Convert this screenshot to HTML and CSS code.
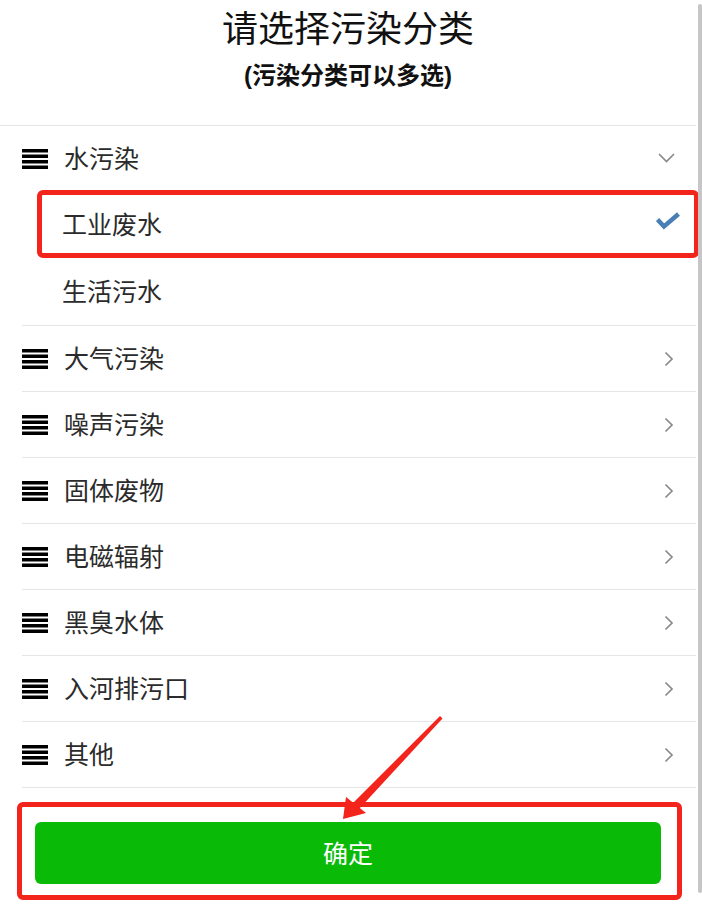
FILE: index.html
```html
<!DOCTYPE html>
<html lang="zh-CN">
<head>
<meta charset="utf-8">
<title>请选择污染分类</title>
<link rel="stylesheet" href="styles.css">
</head>
<body>
<div class="page">
  <header class="header">
    <h1 class="title">请选择污染分类</h1>
    <p class="subtitle">(污染分类可以多选)</p>
  </header>

  <div class="list">
    <div class="group">
      <div class="row head">
        <svg class="menu" viewBox="0 0 26 20" width="26" height="20"><rect x="0" y="0" width="26" height="3.5"/><rect x="0" y="5.5" width="26" height="3.5"/><rect x="0" y="11" width="26" height="3.5"/><rect x="0" y="16.5" width="26" height="3.5"/></svg>
        <span class="label">水污染</span>
        <svg class="arrow-down" viewBox="0 0 17 10" width="17" height="10"><polyline points="1,1 8.5,8.5 16,1"/></svg>
      </div>
      <div class="row sub">
        <span class="label">工业废水</span>
        <svg class="check" viewBox="0 0 24 18" width="24" height="18"><polyline points="1.5,7.5 8,14.5 22.5,2"/></svg>
      </div>
      <div class="row sub last">
        <span class="label">生活污水</span>
      </div>
    </div>

    <div class="row item">
      <svg class="menu" viewBox="0 0 26 20" width="26" height="20"><rect x="0" y="0" width="26" height="3.5"/><rect x="0" y="5.5" width="26" height="3.5"/><rect x="0" y="11" width="26" height="3.5"/><rect x="0" y="16.5" width="26" height="3.5"/></svg>
      <span class="label">大气污染</span>
      <svg class="arrow-right" viewBox="0 0 10 16" width="10" height="16"><polyline points="1.5,1.5 8,8 1.5,14.5"/></svg>
    </div>
    <div class="row item">
      <svg class="menu" viewBox="0 0 26 20" width="26" height="20"><rect x="0" y="0" width="26" height="3.5"/><rect x="0" y="5.5" width="26" height="3.5"/><rect x="0" y="11" width="26" height="3.5"/><rect x="0" y="16.5" width="26" height="3.5"/></svg>
      <span class="label">噪声污染</span>
      <svg class="arrow-right" viewBox="0 0 10 16" width="10" height="16"><polyline points="1.5,1.5 8,8 1.5,14.5"/></svg>
    </div>
    <div class="row item">
      <svg class="menu" viewBox="0 0 26 20" width="26" height="20"><rect x="0" y="0" width="26" height="3.5"/><rect x="0" y="5.5" width="26" height="3.5"/><rect x="0" y="11" width="26" height="3.5"/><rect x="0" y="16.5" width="26" height="3.5"/></svg>
      <span class="label">固体废物</span>
      <svg class="arrow-right" viewBox="0 0 10 16" width="10" height="16"><polyline points="1.5,1.5 8,8 1.5,14.5"/></svg>
    </div>
    <div class="row item">
      <svg class="menu" viewBox="0 0 26 20" width="26" height="20"><rect x="0" y="0" width="26" height="3.5"/><rect x="0" y="5.5" width="26" height="3.5"/><rect x="0" y="11" width="26" height="3.5"/><rect x="0" y="16.5" width="26" height="3.5"/></svg>
      <span class="label">电磁辐射</span>
      <svg class="arrow-right" viewBox="0 0 10 16" width="10" height="16"><polyline points="1.5,1.5 8,8 1.5,14.5"/></svg>
    </div>
    <div class="row item">
      <svg class="menu" viewBox="0 0 26 20" width="26" height="20"><rect x="0" y="0" width="26" height="3.5"/><rect x="0" y="5.5" width="26" height="3.5"/><rect x="0" y="11" width="26" height="3.5"/><rect x="0" y="16.5" width="26" height="3.5"/></svg>
      <span class="label">黑臭水体</span>
      <svg class="arrow-right" viewBox="0 0 10 16" width="10" height="16"><polyline points="1.5,1.5 8,8 1.5,14.5"/></svg>
    </div>
    <div class="row item">
      <svg class="menu" viewBox="0 0 26 20" width="26" height="20"><rect x="0" y="0" width="26" height="3.5"/><rect x="0" y="5.5" width="26" height="3.5"/><rect x="0" y="11" width="26" height="3.5"/><rect x="0" y="16.5" width="26" height="3.5"/></svg>
      <span class="label">入河排污口</span>
      <svg class="arrow-right" viewBox="0 0 10 16" width="10" height="16"><polyline points="1.5,1.5 8,8 1.5,14.5"/></svg>
    </div>
    <div class="row item">
      <svg class="menu" viewBox="0 0 26 20" width="26" height="20"><rect x="0" y="0" width="26" height="3.5"/><rect x="0" y="5.5" width="26" height="3.5"/><rect x="0" y="11" width="26" height="3.5"/><rect x="0" y="16.5" width="26" height="3.5"/></svg>
      <span class="label">其他</span>
      <svg class="arrow-right" viewBox="0 0 10 16" width="10" height="16"><polyline points="1.5,1.5 8,8 1.5,14.5"/></svg>
    </div>
  </div>

  <footer class="footer">
    <button class="confirm" type="button">确定</button>
  </footer>

  <div class="mark mark-item"></div>
  <div class="mark mark-button"></div>
  <svg class="mark-arrow" viewBox="0 0 702 908" width="702" height="908">
    <polygon points="440,716 442.5,718.5 359,809 353,803"/>
    <polygon points="343,819 346,797 366,813"/>
  </svg>
  <div class="scrollbar"></div>
</div>
</body>
</html>
```

FILE: styles.css
```css
html, body {
  margin: 0;
  padding: 0;
  background: #ffffff;
}

body {
  font-family: "Noto Sans CJK SC", "Liberation Sans", sans-serif;
  color: #333333;
}

.page {
  position: relative;
  width: 702px;
  height: 908px;
  overflow: hidden;
}

.header {
  width: 696px;
  height: 126px;
  box-sizing: border-box;
  border-bottom: 1px solid #e6e6e6;
  text-align: center;
  padding-top: 6px;
}

.title {
  margin: 0;
  font-size: 36px;
  line-height: 40px;
  font-weight: normal;
  color: #111111;
}

.subtitle {
  margin: 15px 0 0;
  font-family: "Liberation Sans", "Noto Sans CJK SC", sans-serif;
  font-size: 24px;
  line-height: 30px;
  font-weight: bold;
  color: #111111;
}

.list {
  width: 696px;
}

.row {
  display: flex;
  align-items: center;
  margin-left: 22px;
  padding-right: 22px;
  box-sizing: border-box;
}

.item {
  height: 66px;
  border-bottom: 1px solid #e6e6e6;
}

.head {
  height: 65px;
}

.sub {
  height: 67px;
  padding-left: 40px;
  padding-right: 16px;
}

.sub.last {
  height: 68px;
  border-bottom: 1px solid #e6e6e6;
}

.menu {
  flex: none;
  fill: #000000;
  margin-right: 16px;
}

.label {
  flex: 1;
  font-size: 25px;
  line-height: 30px;
  margin-bottom: 3px;
  color: #2b2b2b;
}

.arrow-right,
.arrow-down {
  flex: none;
  fill: none;
  stroke: #8a8a8a;
  stroke-width: 1.7;
}

.arrow-down {
  margin-right: -1px;
  margin-top: -2px;
}

.check {
  flex: none;
  fill: none;
  stroke: #4a7fb6;
  stroke-width: 4.5;
  margin-top: -8px;
}

.footer {
  width: 696px;
  padding-top: 34px;
}

.confirm {
  display: block;
  width: 626px;
  height: 62px;
  margin: 0 35px;
  border: none;
  border-radius: 6px;
  background: #09bb07;
  color: #ffffff;
  font-family: "Noto Sans CJK SC", "Liberation Sans", sans-serif;
  font-size: 25px;
  padding: 0 0 3px;
}

.mark {
  position: absolute;
  box-sizing: border-box;
  border: 5px solid #f2241c;
  border-radius: 6px;
}

.mark-item {
  left: 37px;
  top: 190px;
  width: 662px;
  height: 68px;
}

.mark-button {
  left: 17px;
  top: 802px;
  width: 665px;
  height: 98px;
}

.mark-arrow {
  position: absolute;
  left: 0;
  top: 0;
  fill: #f2241c;
  pointer-events: none;
}

.scrollbar {
  position: absolute;
  right: 0;
  top: 4px;
  width: 4px;
  height: 889px;
  border-radius: 2px;
  background: #c6c6c6;
}
```
